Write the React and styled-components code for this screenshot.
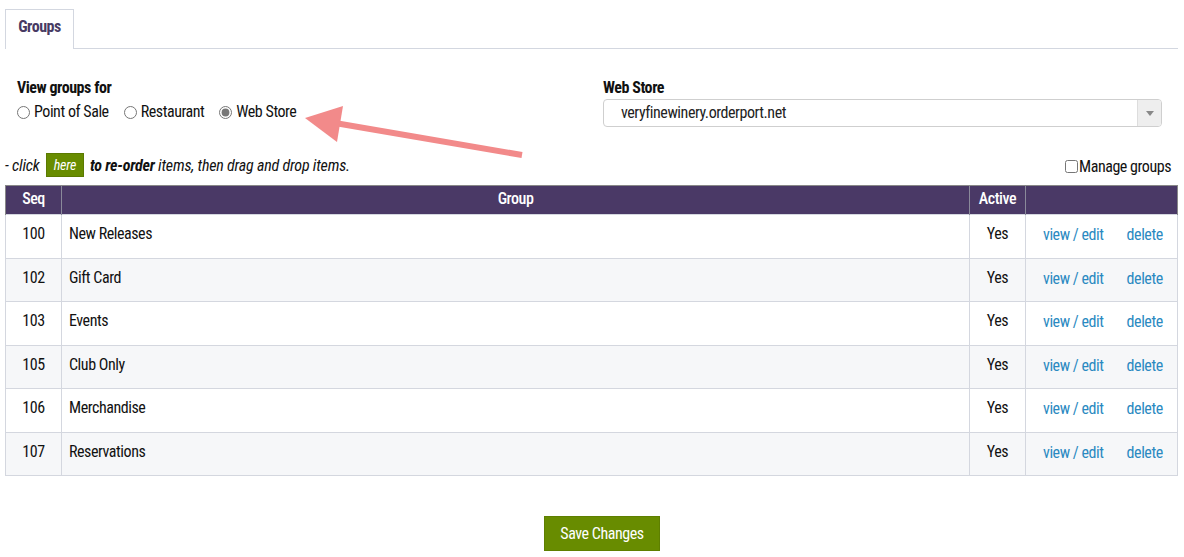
import React from "react";
import styled, { createGlobalStyle } from "styled-components";

const Global = createGlobalStyle`
  html, body { margin: 0; padding: 0; background: #fff; }
  body {
    font-family: "Roboto Condensed", Roboto, "Liberation Sans", sans-serif;
    font-size: 16px;
    letter-spacing: -0.45px;
    color: #111;
  }
`;

const Page = styled.div`
  position: relative;
  padding: 9px 6px 0 5px;
  width: 1184px;
  box-sizing: border-box;
`;

const TabBar = styled.div`
  display: flex;
  border-bottom: 1px solid #d3d7e0;
  height: 39px;
`;

const Tab = styled.div`
  display: flex;
  justify-content: center;
  width: 69px;
  height: 40px;
  padding-top: 7px;
  box-sizing: border-box;
  border: 1px solid #d3d7e0;
  border-bottom: none;
  background: #fff;
  margin-bottom: -1px;
  font-weight: 700;
  font-size: 16px;
  line-height: 20px;
  color: #473a63;
`;

const Filters = styled.div`
  display: grid;
  grid-template-columns: 586px 559px;
  padding: 29px 0 0 12px;
  height: 96px;
  box-sizing: border-box;
`;

const FieldLabel = styled.div`
  font-weight: 700;
  font-size: 16px;
  line-height: 20px;
`;

const RadioRow = styled.div`
  display: flex;
  gap: 15px;
  margin-top: 4px;
  line-height: 20px;
  font-size: 16px;
`;

const RadioLabel = styled.label`
  display: flex;
  align-items: center;
  gap: 4px;
  input {
    margin: 0;
    width: 13px;
    height: 13px;
    accent-color: #777;
  }
`;

const Select = styled.div`
  display: flex;
  height: 28px;
  margin-top: 1px;
  border: 1px solid #cfcfcf;
  border-radius: 4px;
  box-sizing: border-box;
  overflow: hidden;
`;

const SelectValue = styled.div`
  flex: 1;
  display: flex;
  align-items: center;
  padding: 0 0 2px 17px;
  font-size: 16px;
  color: #222;
`;

const SelectArrow = styled.div`
  width: 23px;
  display: flex;
  align-items: center;
  justify-content: center;
  background: #eee;
  border-left: 1px solid #ddd;
  &::after {
    content: "";
    border-left: 4px solid transparent;
    border-right: 4px solid transparent;
    border-top: 5px solid #888;
  }
`;

const Instructions = styled.div`
  display: flex;
  align-items: center;
  justify-content: space-between;
  height: 40px;
  padding: 0 7px 0 0;
  box-sizing: border-box;
`;

const Hint = styled.div`
  display: flex;
  align-items: center;
  font-style: italic;
  font-size: 16px;
  letter-spacing: -0.2px;
  white-space: pre;
  b { font-weight: 700; }
`;

const HereButton = styled.span`
  display: inline-flex;
  align-items: center;
  justify-content: center;
  width: 38px;
  height: 24px;
  margin: 0 6px 0 3px;
  background: #688c00;
  color: #fff;
  font-size: 14px;
  font-style: italic;
  border: 1px solid #5b7a00;
  box-sizing: border-box;
`;

const Manage = styled.label`
  display: flex;
  align-items: center;
  font-size: 16px;
  margin-top: 3px;
  input { margin: 0 1px 0 0; width: 13px; height: 13px; }
`;

const Table = styled.table`
  width: 100%;
  border-collapse: collapse;
  table-layout: fixed;
`;

const Th = styled.th`
  background: #4a3966;
  color: #fff;
  font-weight: 500;
  font-size: 16px;
  height: 29px;
  padding: 3px 0 0;
  line-height: 20px;
  vertical-align: top;
  box-sizing: border-box;
  border-left: 1px solid #8a8a9a;
  border-top: 1px solid #888;
  &:first-child { border-left: 1px solid #888; }
  &:last-child { border-right: 1px solid #888; }
`;

const Row = styled.tr`
  background: ${(p) => (p.$alt ? "#f6f7f9" : "#fff")};
`;

const Td = styled.td`
  border: 1px solid #d4d7df;
  height: 43.5px;
  box-sizing: border-box;
  padding: 9px 7px 0;
  vertical-align: top;
  line-height: 20px;
  font-size: 16px;
  white-space: nowrap;
  text-align: ${(p) => p.$align || "left"};
`;

const Actions = styled.div`
  display: flex;
  gap: 23px;
  padding-left: 10px;
  padding-top: 1px;
`;

const Link = styled.a`
  color: #2a89c1;
  text-decoration: none;
  cursor: pointer;
`;

const Footer = styled.div`
  display: flex;
  justify-content: center;
  padding: 40px 0 0 21px;
`;

const SaveButton = styled.button`
  width: 116px;
  height: 35px;
  background: #688c00;
  color: #fff;
  border: 1px solid #5e7f00;
  font-family: inherit;
  letter-spacing: -0.45px;
  font-size: 16px;
  cursor: pointer;
`;

const ArrowOverlay = styled.svg`
  position: absolute;
  left: 0;
  top: 0;
  pointer-events: none;
`;

const groups = [
  { seq: 100, name: "New Releases" },
  { seq: 102, name: "Gift Card" },
  { seq: 103, name: "Events" },
  { seq: 105, name: "Club Only" },
  { seq: 106, name: "Merchandise" },
  { seq: 107, name: "Reservations" },
];

export default function App() {
  return (
    <>
      <Global />
      <Page>
        <TabBar>
          <Tab>Groups</Tab>
        </TabBar>
        <Filters>
          <div>
            <FieldLabel>View groups for</FieldLabel>
            <RadioRow>
              <RadioLabel><input type="radio" name="vg" />Point of Sale</RadioLabel>
              <RadioLabel><input type="radio" name="vg" />Restaurant</RadioLabel>
              <RadioLabel><input type="radio" name="vg" defaultChecked />Web Store</RadioLabel>
            </RadioRow>
          </div>
          <div>
            <FieldLabel>Web Store</FieldLabel>
            <Select>
              <SelectValue>veryfinewinery.orderport.net</SelectValue>
              <SelectArrow />
            </Select>
          </div>
        </Filters>
        <Instructions>
          <Hint>
            - click <HereButton>here</HereButton><b>to re-order</b> items, then drag and drop items.
          </Hint>
          <Manage><input type="checkbox" />Manage groups</Manage>
        </Instructions>
        <Table>
          <colgroup>
            <col style={{ width: 56 }} />
            <col />
            <col style={{ width: 56 }} />
            <col style={{ width: 152 }} />
          </colgroup>
          <thead>
            <tr>
              <Th>Seq</Th>
              <Th>Group</Th>
              <Th>Active</Th>
              <Th></Th>
            </tr>
          </thead>
          <tbody>
            {groups.map((g, i) => (
              <Row key={g.seq} $alt={i % 2 === 1}>
                <Td $align="center">{g.seq}</Td>
                <Td>{g.name}</Td>
                <Td $align="center">Yes</Td>
                <Td>
                  <Actions>
                    <Link>view / edit</Link>
                    <Link>delete</Link>
                  </Actions>
                </Td>
              </Row>
            ))}
          </tbody>
        </Table>
        <Footer>
          <SaveButton>Save Changes</SaveButton>
        </Footer>
        <ArrowOverlay width="1184" height="557" viewBox="0 0 1184 557">
          <line x1="522" y1="155" x2="335" y2="123" stroke="#f28a8a" strokeWidth="6" />
          <polygon points="305,118 343,106 337,142" fill="#f28a8a" />
        </ArrowOverlay>
      </Page>
    </>
  );
}
